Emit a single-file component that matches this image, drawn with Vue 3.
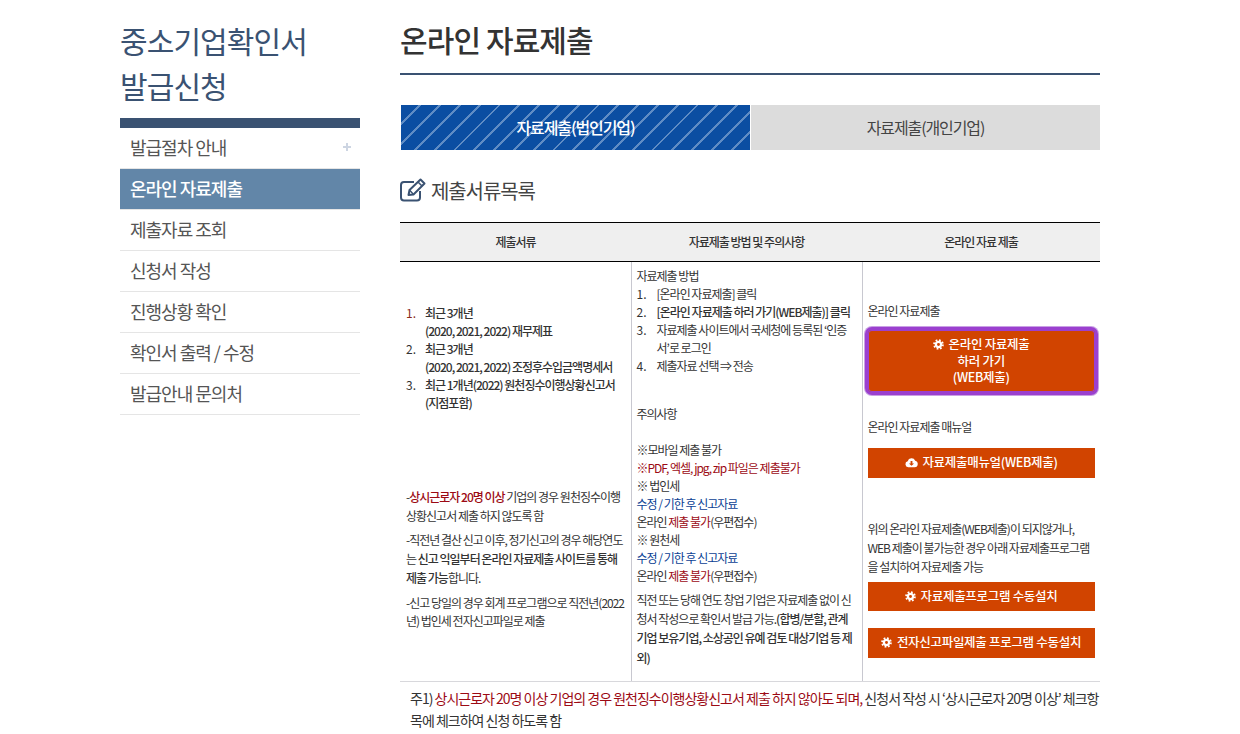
<script setup>
const menu = [
  { label: '발급절차 안내', plus: true },
  { label: '온라인 자료제출', active: true },
  { label: '제출자료 조회' },
  { label: '신청서 작성' },
  { label: '진행상황 확인' },
  { label: '확인서 출력 / 수정' },
  { label: '발급안내 문의처' },
]
</script>

<template>
  <div class="page">
    <aside class="side">
      <h2 class="side-title">중소기업확인서<br />발급신청</h2>
      <ul class="menu">
        <li v-for="m in menu" :key="m.label" :class="{ active: m.active }">
          <span>{{ m.label }}</span>
          <i v-if="m.plus" class="plus"></i>
        </li>
      </ul>
    </aside>

    <main class="main">
      <h1 class="title">온라인 자료제출</h1>

      <div class="tabs">
        <div class="tab on">자료제출(법인기업)</div>
        <div class="tab">자료제출(개인기업)</div>
      </div>

      <h3 class="section">
        <svg width="28" height="24" viewBox="0 0 28 24" fill="none" stroke="#3a5272" stroke-width="2">
          <path d="M20 13v6.500a3 3 0 0 1-3 3H4a3 3 0 0 1-3-3V7a3 3 0 0 1 3-3H14" />
          <path d="M8.500 17l1-5L20.500 1.500l4 4L13.500 16.500z" stroke-linejoin="round" />
          <path d="M18 4l4 4M9.500 12l4 4.500" stroke-width="1.500" />
        </svg>
        <span>제출서류목록</span>
      </h3>

      <table class="tbl">
        <colgroup>
          <col class="c1" /><col class="c2" /><col class="c3" />
        </colgroup>
        <thead>
          <tr>
            <th>제출서류</th>
            <th>자료제출 방법 및 주의사항</th>
            <th>온라인 자료 제출</th>
          </tr>
        </thead>
        <tbody>
          <tr>
            <td class="col1">
              <ol class="docs">
                <li><b>최근 3개년<br />(2020, 2021, 2022) 재무제표</b></li>
                <li><b>최근 3개년<br />(2020, 2021, 2022) 조정후수입금액명세서</b></li>
                <li><b>최근 1개년(2022) 원천징수이행상황신고서<br />(지점포함)</b></li>
              </ol>
              <p>-<span class="red"><b>상시근로자 20명 이상</b></span> 기업의 경우 원천징수이행상황신고서 제출 하지 않도록 함</p>
              <p>-직전년 결산 신고 이후, 정기신고의 경우 해당연도는 <b>신고 익일부터 온라인 자료제출 사이트를 통해 제출 가능</b>합니다.</p>
              <p>-신고 당일의 경우 회계 프로그램으로 직전년(2022년) 법인세 전자신고파일로 제출</p>
            </td>
            <td class="col2">
              <div>자료제출 방법</div>
              <ol class="steps">
                <li>[온라인 자료제출] 클릭</li>
                <li><b>[온라인 자료제출 하러 가기(WEB제출)] 클릭</b></li>
                <li>자료제출 사이트에서 국세청에 등록된 ‘인증서’로 로그인</li>
                <li>제출자료 선택 ⇒ 전송</li>
              </ol>
              <div class="notice">주의사항</div>
              <div class="gap">※모바일 제출 불가</div>
              <div class="red">※PDF, 엑셀, jpg, zip 파일은 제출불가</div>
              <div>※ 법인세</div>
              <div class="blue">수정 / 기한 후 신고자료</div>
              <div>온라인 <span class="red">제출 불가</span>(우편접수)</div>
              <div>※ 원천세</div>
              <div class="blue">수정 / 기한 후 신고자료</div>
              <div>온라인 <span class="red">제출 불가</span>(우편접수)</div>
              <p>직전 또는 당해 연도 창업 기업은 자료제출 없이 신청서 작성으로 확인서 발급 가능.<b>(합병/분할, 관계기업 보유기업, 소상공인 유예 검토 대상기업 등 제외)</b></p>
            </td>
            <td class="col3">
              <div class="lbl first">온라인 자료제출</div>
              <a class="btn big">
                <span>
                  <svg class="ico" width="11" height="11" viewBox="0 0 12 12" fill="none" stroke="#fff">
                    <circle cx="6" cy="6" r="2.800" stroke-width="2.400" />
                    <circle cx="6" cy="6" r="4.800" stroke-width="2" stroke-dasharray="1.900 1.870" />
                  </svg>
                  온라인 자료제출
                </span>
                <span>하러 가기</span>
                <span>(WEB제출)</span>
              </a>
              <div class="lbl second">온라인 자료제출 매뉴얼</div>
              <a class="btn">
                <svg class="ico" width="13" height="11" viewBox="0 0 14 11">
                  <path fill="#fff" d="M3.500 10.500a3.200 3.200 0 0 1-.6-6.300A4.300 4.300 0 0 1 11 3.600a3.500 3.500 0 0 1-.5 6.900z" />
                  <path fill="#d14400" d="M6 3.800h2v2.700h1.800L7 9 4.200 6.500H6z" />
                </svg>
                자료제출매뉴얼(WEB제출)
              </a>
              <p class="desc">위의 온라인 자료제출(WEB제출)이 되지않거나, WEB 제출이 불가능한 경우 아래 자료제출프로그램을 설치하여 자료제출 가능</p>
              <a class="btn">
                <svg class="ico" width="11" height="11" viewBox="0 0 12 12" fill="none" stroke="#fff">
                  <circle cx="6" cy="6" r="2.800" stroke-width="2.400" />
                  <circle cx="6" cy="6" r="4.800" stroke-width="2" stroke-dasharray="1.900 1.870" />
                </svg>
                자료제출프로그램 수동설치
              </a>
              <a class="btn last">
                <svg class="ico" width="11" height="11" viewBox="0 0 12 12" fill="none" stroke="#fff">
                  <circle cx="6" cy="6" r="2.800" stroke-width="2.400" />
                  <circle cx="6" cy="6" r="4.800" stroke-width="2" stroke-dasharray="1.900 1.870" />
                </svg>
                전자신고파일제출 프로그램 수동설치
              </a>
            </td>
          </tr>
        </tbody>
      </table>

      <p class="foot">주1) <span class="red">상시근로자 20명 이상 기업의 경우 원천징수이행상황신고서 제출 하지 않아도 되며,</span> 신청서 작성 시 ‘상시근로자 20명 이상’ 체크항목에 체크하여 신청 하도록 함</p>
    </main>
  </div>
</template>

<style>
html, body { margin: 0; overflow: hidden; background: #fff; }
</style>

<style scoped>
.page {
  width: 980px;
  height: 734px;
  margin: 0 0 0 120px;
  display: flex;
  gap: 40px;
  overflow: hidden;
  font-family: "Noto Sans CJK KR", "Noto Sans", sans-serif;
  color: #333;
}
.side { width: 240px; flex: none; }
.side-title {
  margin: 18px 0 10px;
  font-size: 30px;
  font-weight: 400;
  line-height: 45px;
  letter-spacing: -0.9px;
  color: #3a5272;
}
.menu {
  list-style: none;
  margin: 0;
  padding: 0;
  border-top: 10px solid #3a5272;
}
.menu li {
  padding: 0 10px 2px;
  box-sizing: border-box;
  height: 41px;
  border-bottom: 1px solid #e5e5e5;
  font-size: 18px;
  letter-spacing: -1px;
  color: #555;
  display: flex;
  justify-content: space-between;
  align-items: center;
}
.menu li.active { background: #6286a8; color: #fff; font-weight: 500; }
.plus {
  width: 8px;
  height: 8px;
  margin-right: -1px;
  background:
    linear-gradient(#cdd5e2, #cdd5e2) center / 8px 2px no-repeat,
    linear-gradient(#cdd5e2, #cdd5e2) center / 2px 8px no-repeat;
}
.main { width: 700px; flex: none; }
.title {
  margin: 0;
  height: 73px;
  box-sizing: content-box;
  border-bottom: 2px solid #3a5272;
  font-size: 30px;
  font-weight: 500;
  line-height: 78px;
  letter-spacing: -0.9px;
  color: #333;
}
.tabs {
  margin: 30px 0 0 1px;
  display: flex;
  gap: 1px;
}
.tab {
  flex: 1;
  height: 45px;
  line-height: 45px;
  text-align: center;
  background: #dcdcdc;
  font-size: 16px;
  letter-spacing: -1.1px;
  color: #444;
}
.tab.on {
  color: #fff;
  font-weight: 500;
  background: repeating-linear-gradient(-45deg, #0b4ea2 0 12px, #5f8cc4 12px 14px);
}
.section {
  margin: 22px 0 14px;
  height: 36px;
  display: flex;
  align-items: center;
  gap: 3px;
  font-size: 20px;
  font-weight: 400;
  letter-spacing: -1.1px;
  color: #444;
}
.tbl {
  width: 700px;
  table-layout: fixed;
  border-collapse: collapse;
  font-size: 12px;
  letter-spacing: -1px;
  line-height: 18px;
  color: #333;
}
.c1 { width: 231px; }
.c2 { width: 231px; }
.c3 { width: 238px; }
th {
  height: 38px;
  padding: 0;
  background: #efefef;
  border-top: 1px solid #000;
  border-bottom: 1px solid #000;
  font-weight: 500;
  font-size: 12px;
}
td {
  padding: 0;
  vertical-align: top;
  border-bottom: 1px solid #d8d8dc;
  border-left: 1px solid #c8c8d0;
}
td:first-child { border-left: 0; }
b { font-weight: 500; }
.col1 { height: 420px; box-sizing: border-box; padding: 42px 6px 0 6px; }
.docs, .steps { list-style: none; counter-reset: n; }
.docs li, .steps li { counter-increment: n; }
.docs li::before, .steps li::before {
  content: counter(n) ".";
  display: inline-block;
  letter-spacing: 0;
}
.docs { margin: 0 0 76px; padding: 0 0 0 19px; }
.docs li::before { width: 19px; margin-left: -19px; }
.docs li:first-child::before { color: #8a2a1a; }
.col1 p { margin: 0 0 6px; line-height: 18.700px; }
.red { color: #9c0a14; }
.blue { color: #0b3f94; }
.col2 { padding: 5px 5px 0 5px; }
.steps { margin: 0; padding: 0 0 0 20px; }
.steps li::before { width: 20px; margin-left: -20px; }
.notice { margin-top: 30px; }
.gap { margin-top: 18px; }
.col2 p { margin: 5px 0 0; line-height: 19.200px; }
.col3 { padding: 0 5px; }
.lbl { line-height: 18px; }
.first { margin-top: 40px; }
.second { margin-top: 26px; }
.btn {
  display: block;
  height: 30px;
  line-height: 28px;
  background: #d14400;
  color: #fff;
  text-align: center;
  font-size: 12.500px;
  font-weight: 500;
  letter-spacing: -0.3px;
}
.btn.big {
  margin-top: 10px;
  height: 62px;
  line-height: 16.500px;
  padding-top: 6px;
  box-sizing: border-box;
  border-radius: 4px;
  box-shadow: inset 0 0 0 1px #9b40cf, 0 0 0 3px #9b40cf, 0 0 0 4px #c9a0e4;
}
.btn.big span { display: block; }
.second + .btn { margin-top: 12px; }
.ico { margin-right: 2px; vertical-align: -1px; }
.desc { margin: 41px 0 6px; line-height: 19px; }
.desc + .btn { height: 29px; }
.btn.last { margin-top: 17px; }
.foot {
  margin: 5px 0 0;
  padding-left: 10px;
  font-size: 14px;
  line-height: 22px;
  letter-spacing: -1px;
  color: #333;
}
</style>
